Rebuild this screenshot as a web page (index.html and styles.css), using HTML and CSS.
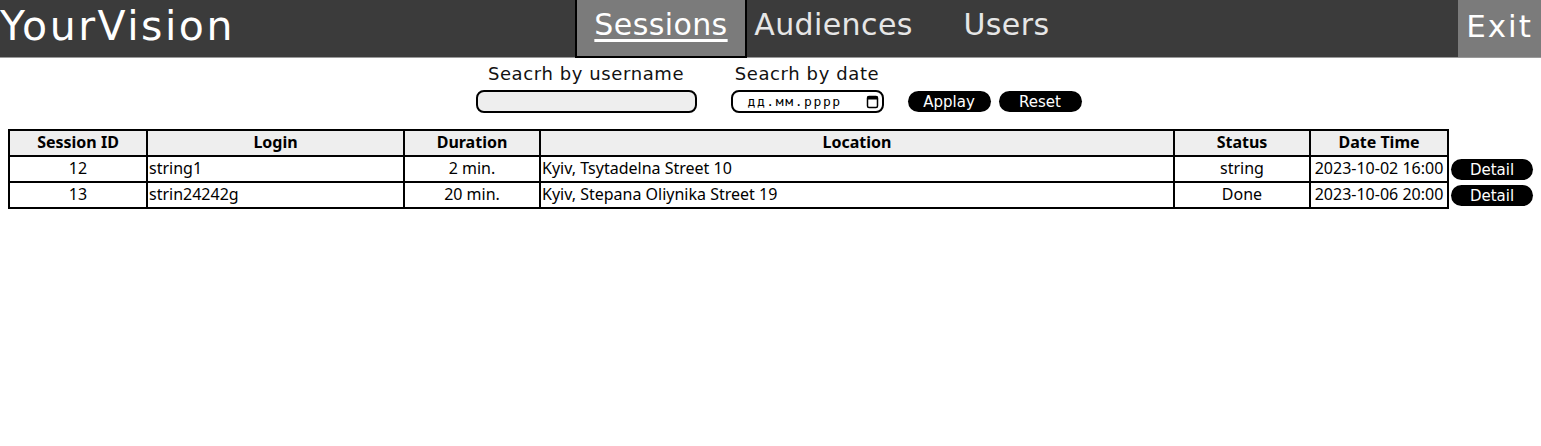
FILE: index.html
```html
<!DOCTYPE html>
<html lang="en">
<head>
<meta charset="utf-8">
<title>YourVision — Sessions</title>
<link rel="stylesheet" href="styles.css">
</head>
<body>
<header class="topbar">
  <div class="logo">YourVision</div>
  <nav class="nav">
    <a class="nav-item active" href="#">Sessions</a>
    <a class="nav-item" href="#">Audiences</a>
    <a class="nav-item" href="#">Users</a>
  </nav>
  <a class="exit" href="#">Exit</a>
</header>

<section class="filters">
  <label class="field">
    <span class="field-label">Seacrh by username</span>
    <input class="text-input" type="text">
  </label>
  <label class="field">
    <span class="field-label">Seacrh by date</span>
    <span class="date-input">
      <span class="date-placeholder">дд.мм.рррр</span>
      <svg class="cal" width="13" height="14" viewBox="0 0 13 14"><rect x="1.5" y="1.5" width="10" height="11" rx="1.5" fill="none" stroke="#000" stroke-width="1.5"/><rect x="1.5" y="1.5" width="10" height="3" fill="#000"/></svg>
    </span>
  </label>
  <div class="actions">
    <button class="pill apply">Applay</button>
    <button class="pill reset">Reset</button>
  </div>
</section>

<table class="sessions">
  <thead>
    <tr>
      <th class="c-id">Session ID</th>
      <th class="c-login">Login</th>
      <th class="c-dur">Duration</th>
      <th class="c-loc">Location</th>
      <th class="c-status">Status</th>
      <th class="c-date">Date Time</th>
      <th class="c-act"></th>
    </tr>
  </thead>
  <tbody>
    <tr>
      <td class="center">12</td>
      <td>string1</td>
      <td class="center">2 min.</td>
      <td>Kyiv, Tsytadelna Street 10</td>
      <td class="center">string</td>
      <td class="center">2023-10-02 16:00</td>
      <td class="c-act"><button class="pill detail">Detail</button></td>
    </tr>
    <tr>
      <td class="center">13</td>
      <td>strin24242g</td>
      <td class="center">20 min.</td>
      <td>Kyiv, Stepana Oliynika Street 19</td>
      <td class="center">Done</td>
      <td class="center">2023-10-06 20:00</td>
      <td class="c-act"><button class="pill detail">Detail</button></td>
    </tr>
  </tbody>
</table>
</body>
</html>
```

FILE: styles.css
```css
* { box-sizing: border-box; }
html, body { margin: 0; padding: 0; background: #fff; }
body { font-family: "Noto Sans", "Open Sans", sans-serif; color: #000; }

.topbar {
  display: flex;
  align-items: stretch;
  height: 58px;
  background: #3b3b3b;
  border-bottom: 1px solid #9a9a9a;
}
.logo {
  font-family: "DejaVu Sans", sans-serif;
  font-size: 41px;
  letter-spacing: 2.5px;
  color: #fff;
  line-height: 52px;
  width: 575px;
}
.nav { display: flex; }
.nav-item {
  width: 173px;
  text-align: center;
  font-family: "DejaVu Sans", sans-serif;
  font-size: 30px;
  letter-spacing: 0.4px;
  line-height: 50px;
  color: #e6e6e6;
  text-decoration: none;
}
.nav-item.active {
  background: #7b7b7b;
  color: #fff;
  text-decoration: underline;
  text-decoration-thickness: 3px;
  text-underline-offset: 4px;
  border: 2px solid #000;
  border-top: none;
  width: 172px;
  margin-bottom: -1px;
}
.exit {
  margin-left: auto;
  width: 83px;
  background: #7b7b7b;
  color: #fff;
  font-family: "DejaVu Sans", sans-serif;
  font-size: 31px;
  letter-spacing: 2px;
  line-height: 52px;
  text-align: center;
  text-decoration: none;
}

.filters {
  display: flex;
  justify-content: center;
  align-items: flex-end;
  gap: 34px;
  padding: 5px 0 0 16px;
  font-family: "DejaVu Sans", sans-serif;
}
.field { display: flex; flex-direction: column; align-items: center; }
.field-label { font-size: 18px; letter-spacing: 0.6px; line-height: 22px; margin-bottom: 5px; color: #111; }
.text-input {
  width: 221px;
  height: 23px;
  border: 2px solid #000;
  border-radius: 8px;
  background: #eeeeee;
  margin: 0;
}
.date-input {
  display: flex;
  align-items: center;
  justify-content: space-between;
  width: 153px;
  height: 23px;
  border: 2px solid #000;
  border-radius: 8px;
  background: #fff;
  padding: 0 3px 0 15px;
}
.date-placeholder { font-family: "DejaVu Sans Mono", monospace; font-size: 13px; letter-spacing: 1.6px; }
.actions { display: flex; gap: 8px; margin-left: -10px; margin-bottom: 1px; }
.pill {
  background: #000;
  color: #fff;
  border: none;
  border-radius: 11px;
  font-family: "DejaVu Sans", sans-serif;
  font-size: 15px;
  height: 21px;
  padding: 0;
  width: 83px;
}

.sessions {
  margin: 16px 0 0 8px;
  border-collapse: collapse;
  font-size: 16px;
  line-height: 21px;
}
.sessions th, .sessions td {
  border: 2px solid #000;
  padding: 1px 1px 2px;
  text-align: left;
  white-space: nowrap;
}
.sessions th {
  background: #eeeeee;
  text-align: center;
  font-weight: 700;
}
.sessions td.center { text-align: center; }
.c-id { width: 138px; }
.c-login { width: 257px; }
.c-dur { width: 136px; }
.c-loc { width: 634px; }
.c-status { width: 136px; }
.c-date { width: 138px; }
.sessions .c-act { border: none; background: none; padding: 1px 0 0 2px; }
.detail { display: block; width: 82px; height: 21px; font-size: 15px; }
```
